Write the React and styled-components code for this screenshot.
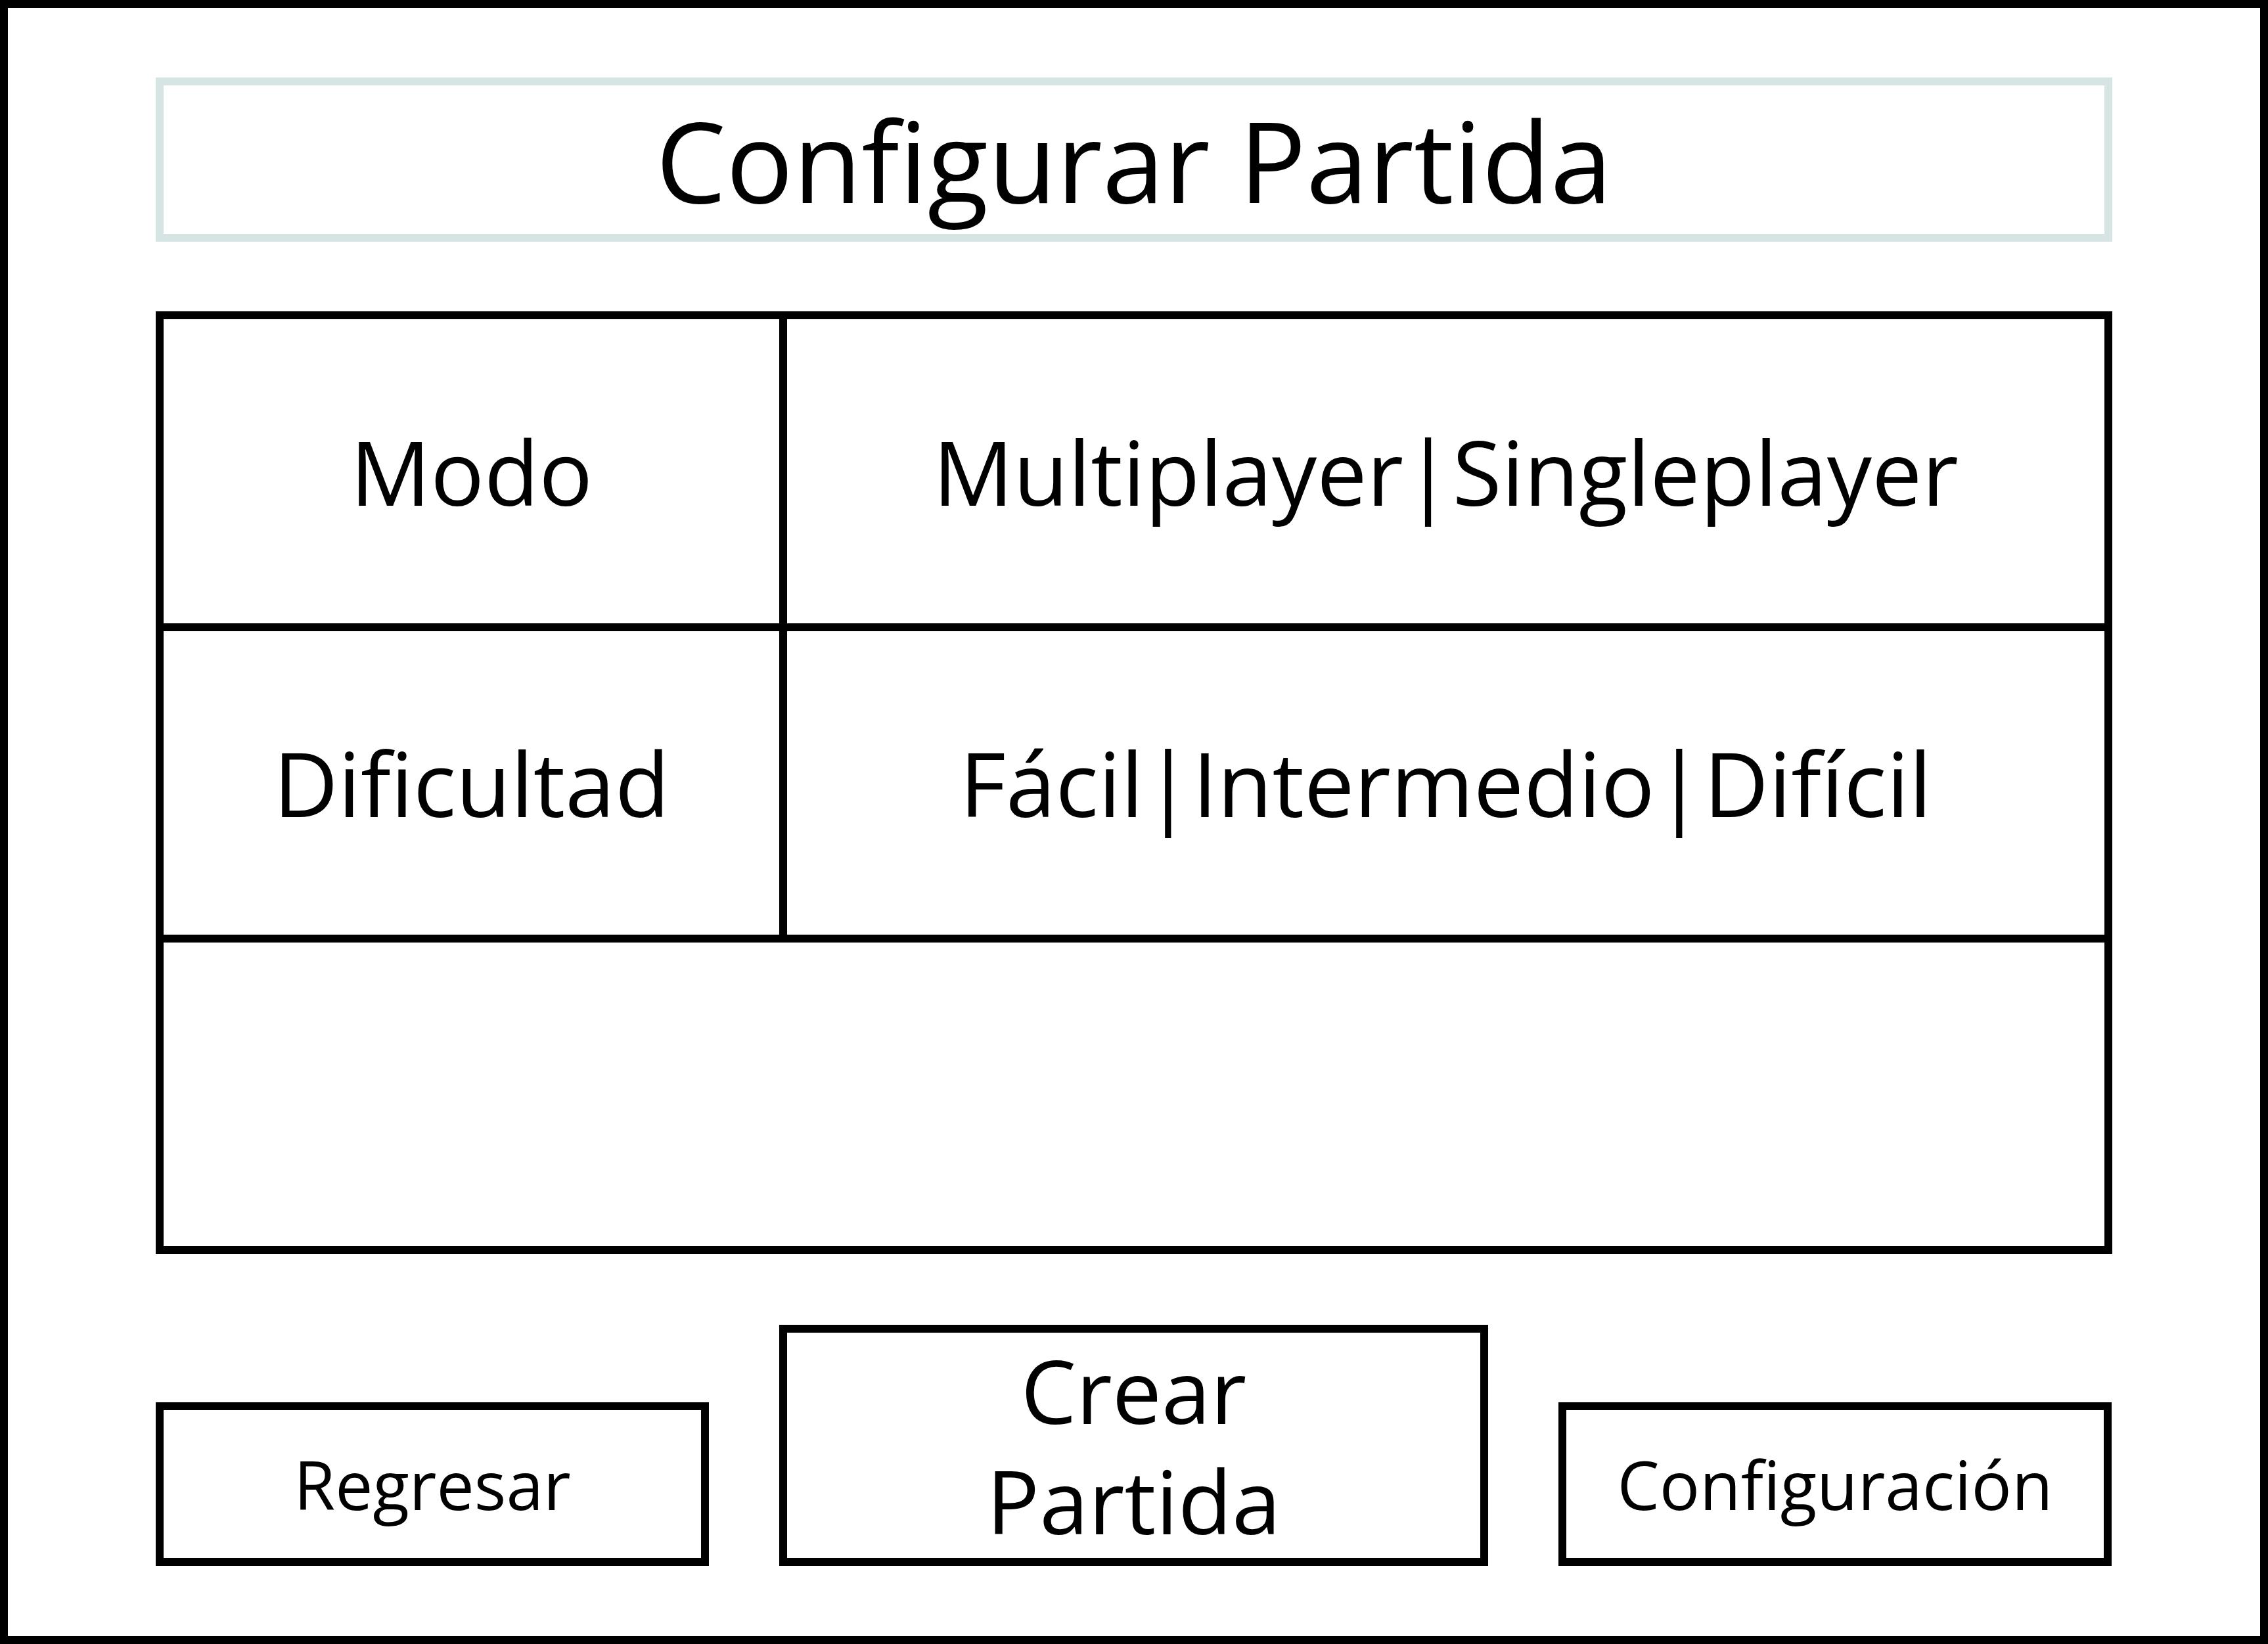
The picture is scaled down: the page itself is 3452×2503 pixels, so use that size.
import React from 'react';
import styled, { createGlobalStyle } from 'styled-components';

const GlobalStyle = createGlobalStyle`
  html, body {
    margin: 0;
    padding: 0;
    background: #ffffff;
  }
  * {
    box-sizing: border-box;
  }
`;

const Frame = styled.div`
  width: 3452px;
  height: 2503px;
  border: 12px solid #000;
  background: #fff;
  padding: 106px 225px 107px 225px;
  display: flex;
  flex-direction: column;
  font-family: 'Open Sans', 'Noto Sans', sans-serif;
  color: #000;
`;

const TitleBox = styled.div`
  height: 250px;
  border: 12px solid #d7e4e4;
  display: flex;
  align-items: center;
  justify-content: center;
  font-size: 170px;
  line-height: 1;
`;

const Table = styled.div`
  margin-top: 106px;
  border: 12px solid #000;
  background: #000;
  display: grid;
  grid-template-columns: 937px 2005px;
  grid-template-rows: 463px 462px 462px;
  gap: 12px;
`;

const Cell = styled.div`
  background: #fff;
  display: flex;
  align-items: center;
  justify-content: center;
  font-size: 136px;
  line-height: 1;
  grid-column: ${props => (props.wide ? '1 / span 2' : 'auto')};
`;

const Actions = styled.div`
  margin-top: 108px;
  display: flex;
  align-items: flex-end;
  gap: 107px;
`;

const Button = styled.div`
  width: ${props => (props.big ? '1079px' : '842px')};
  height: ${props => (props.big ? '367px' : '249px')};
  border: 12px solid #000;
  display: flex;
  align-items: center;
  justify-content: center;
  text-align: center;
  font-size: ${props => (props.big ? '134px' : '102px')};
  line-height: 1.25;
  flex-shrink: 0;
`;

const App = () => (
  <>
    <GlobalStyle />
    <Frame>
      <TitleBox>Configurar Partida</TitleBox>
      <Table>
        <Cell>Modo</Cell>
        <Cell>Multiplayer|Singleplayer</Cell>
        <Cell>Dificultad</Cell>
        <Cell>Fácil|Intermedio|Difícil</Cell>
        <Cell wide />
      </Table>
      <Actions>
        <Button>Regresar</Button>
        <Button big>
          Crear
          <br />
          Partida
        </Button>
        <Button>Configuración</Button>
      </Actions>
    </Frame>
  </>
);

export default App;
